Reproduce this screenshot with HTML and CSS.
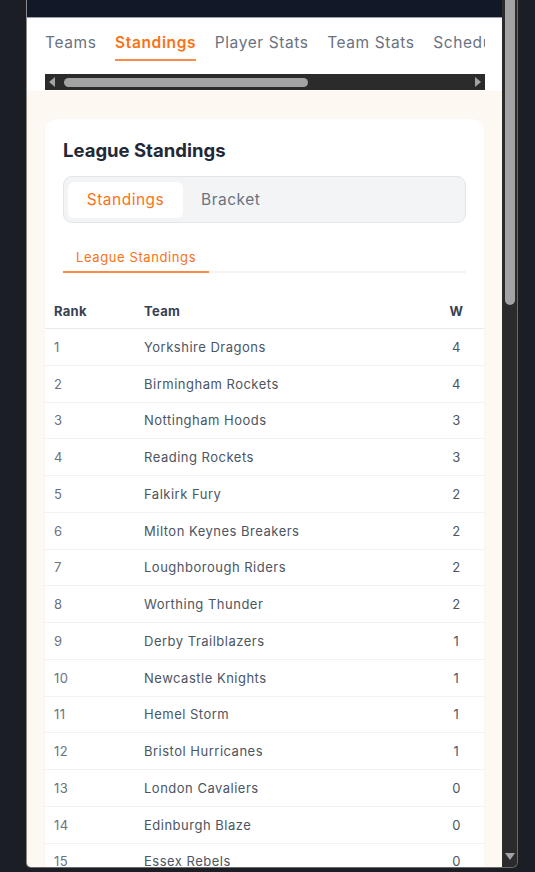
FILE: index.html
```html
<!DOCTYPE html>
<html>
<head>
<meta charset="utf-8">
<link rel="stylesheet" href="styles.css">
</head>
<body>
<div class="frame">
  <div class="app">
    <div class="topbar"></div>
    <nav class="nav">
      <div class="nav-scroll">
        <div class="nav-tabs">
          <span class="nav-tab">Teams</span>
          <span class="nav-tab active">Standings</span>
          <span class="nav-tab">Player Stats</span>
          <span class="nav-tab">Team Stats</span>
          <span class="nav-tab">Schedule</span>
          <span class="nav-tab">Results</span>
        </div>
      </div>
      <div class="hscroll">
        <svg class="arrow" width="10" height="16" viewBox="0 0 10 16"><polygon points="8,3 8,13 2,8" fill="#a3a3a3"/></svg>
        <div class="hscroll-track"><div class="hscroll-thumb"></div></div>
        <svg class="arrow" width="10" height="16" viewBox="0 0 10 16"><polygon points="2,3 2,13 8,8" fill="#a3a3a3"/></svg>
      </div>
    </nav>
    <main class="content">
      <section class="card">
        <h2 class="card-title">League Standings</h2>
        <div class="segment">
          <button class="seg-btn active">Standings</button>
          <button class="seg-btn">Bracket</button>
        </div>
        <div class="subtabs">
          <span class="subtab active">League Standings</span>
        </div>
        <div class="table">
          <div class="row head"><span>Rank</span><span>Team</span><span class="w">W</span></div>
          <div class="row"><span class="rank">1</span><span>Yorkshire Dragons</span><span class="w">4</span></div>
          <div class="row"><span class="rank">2</span><span>Birmingham Rockets</span><span class="w">4</span></div>
          <div class="row"><span class="rank">3</span><span>Nottingham Hoods</span><span class="w">3</span></div>
          <div class="row"><span class="rank">4</span><span>Reading Rockets</span><span class="w">3</span></div>
          <div class="row"><span class="rank">5</span><span>Falkirk Fury</span><span class="w">2</span></div>
          <div class="row"><span class="rank">6</span><span>Milton Keynes Breakers</span><span class="w">2</span></div>
          <div class="row"><span class="rank">7</span><span>Loughborough Riders</span><span class="w">2</span></div>
          <div class="row"><span class="rank">8</span><span>Worthing Thunder</span><span class="w">2</span></div>
          <div class="row"><span class="rank">9</span><span>Derby Trailblazers</span><span class="w">1</span></div>
          <div class="row"><span class="rank">10</span><span>Newcastle Knights</span><span class="w">1</span></div>
          <div class="row"><span class="rank">11</span><span>Hemel Storm</span><span class="w">1</span></div>
          <div class="row"><span class="rank">12</span><span>Bristol Hurricanes</span><span class="w">1</span></div>
          <div class="row"><span class="rank">13</span><span>London Cavaliers</span><span class="w">0</span></div>
          <div class="row"><span class="rank">14</span><span>Edinburgh Blaze</span><span class="w">0</span></div>
          <div class="row"><span class="rank">15</span><span>Essex Rebels</span><span class="w">0</span></div>
          <div class="row"><span class="rank">16</span><span>Kent Crusaders</span><span class="w">0</span></div>
        </div>
      </section>
    </main>
  </div>
  <div class="vscroll">
    <div class="vscroll-thumb"></div>
    <div class="vscroll-space"></div>
    <svg class="varrow" width="14" height="12" viewBox="0 0 14 12"><polygon points="2,2 12,2 7,9" fill="#a3a3a3"/></svg>
  </div>
</div>
</body>
</html>
```

FILE: styles.css
```css
* { box-sizing: border-box; }
html, body { margin: 0; padding: 0; }
body {
  background: #1b1e25;
  font-family: Inter, "Noto Sans", sans-serif;
  height: 872px;
  overflow: hidden;
}
.frame {
  margin-left: 26px;
  width: 492px;
  height: 868px;
  display: flex;
  border-left: 1px solid #8a8a8a;
  border-right: 1px solid #6a6a6a;
  border-bottom: 1px solid #6a6a6a;
  border-radius: 0 0 6px 5px;
  overflow: hidden;
}
.app {
  width: 475px;
  height: 100%;
  overflow: hidden;
  background: #fdf8f1;
}
.topbar {
  height: 18px;
  background: #111827;
  border-bottom: 1px solid #9aa0a8;
}
.nav {
  background: #ffffff;
  padding: 15px 17px 1px 18px;
}
.nav-scroll { overflow: hidden; width: 440px; }
.nav-tabs {
  display: flex;
  gap: 18.5px;
  white-space: nowrap;
}
.nav-tab {
  font-size: 15.5px;
  line-height: 20px;
  color: #6b7280;
  padding-bottom: 6px;
  border-bottom: 2px solid transparent;
  letter-spacing: 0.6px;
}
.nav-tab.active {
  color: #f97316;
  font-weight: 600;
  border-bottom-color: #f98a4a;
  letter-spacing: 0.65px;
}
.hscroll {
  margin-top: 13px;
  height: 16px;
  background: #2b2b2b;
  display: flex;
  align-items: center;
}
.arrow { flex: none; margin: 0 2px; }
.hscroll-track { flex: 1; height: 16px; display: flex; align-items: center; padding-left: 5px; }
.hscroll-thumb {
  width: 244px;
  height: 9px;
  border-radius: 5px;
  background: #a3a3a3;
}
.content {
  padding: 28px 18px 0 18px;
}
.card {
  background: #ffffff;
  border-radius: 12px;
  padding: 17px 18px 0 18px;
  box-shadow: 0 1px 2px rgba(0,0,0,0.03);
}
.card-title {
  margin: 0;
  font-size: 18.5px;
  line-height: 28px;
  font-weight: 700;
  color: #1f2937;
  letter-spacing: 0;
}
.segment {
  margin-top: 12px;
  height: 47px;
  background: #f3f4f6;
  border: 1px solid #e3e5e9;
  border-radius: 9px;
  padding: 4px;
  display: flex;
  align-items: center;
}
.seg-btn {
  font-family: inherit;
  font-size: 15.5px;
  border: none;
  background: transparent;
  color: #6b7280;
  border-radius: 6px;
  padding: 0 18px;
  height: 36px;
  letter-spacing: 0.5px;
}
.seg-btn.active {
  background: #ffffff;
  color: #f97316;
  width: 115px;
  padding: 0;
}
.subtabs {
  margin-top: 18px;
  border-bottom: 2px solid #f3f4f6;
  display: flex;
}
.subtab {
  font-size: 13px;
  line-height: 20px;
  color: #f97316;
  padding: 6px 13px 4px 13px;
  margin-bottom: -2px;
  border-bottom: 2px solid #f98a4a;
  letter-spacing: 0.6px;
}
.table {
  margin: 20px -18px 0 -18px;
}
.row {
  display: grid;
  grid-template-columns: 99px 1fr 55px;
  height: 36.75px;
  align-items: center;
  border-bottom: 1px solid #f1f2f4;
  font-size: 13px;
  color: #4b5563;
  letter-spacing: 0.5px;
}
.row > span:first-child { padding-left: 9px; }
.row.head {
  height: 36px;
  font-weight: 700;
  color: #374151;
  border-bottom-color: #e9eaed;
  letter-spacing: 0.3px;
}
.rank { color: #6b7280; }
.w { text-align: center; }
.vscroll {
  width: 15px;
  height: 100%;
  background: #2b2b2b;
  display: flex;
  flex-direction: column;
  align-items: center;
}
.vscroll-thumb {
  width: 10px;
  height: 305px;
  background: #a3a3a3;
  border-radius: 0 0 5px 5px;
}
.vscroll-space { flex: 1; }
.varrow { margin-bottom: 4px; }
```
